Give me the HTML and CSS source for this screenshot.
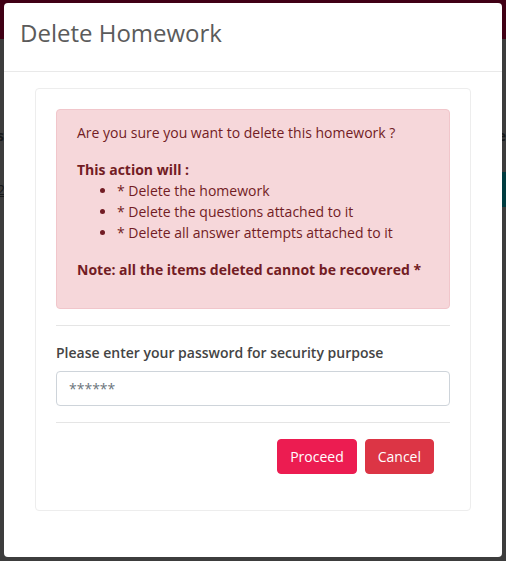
FILE: index.html
```html
<!DOCTYPE html>
<html lang="en">
<head>
<meta charset="utf-8">
<meta name="viewport" content="width=device-width, initial-scale=1">
<title>Delete Homework</title>
<link rel="stylesheet" href="styles.css">
</head>
<body>
<div class="page" aria-hidden="true">
  <div class="page-bar"></div>
  <div class="page-row page-head"><b>s</b><b>e</b></div>
  <div class="page-row"><u>2</u><span class="page-action"></span></div>
</div>
<div class="overlay">
  <section class="modal" role="dialog" aria-modal="true" aria-labelledby="title">
    <header class="modal-header">
      <h1 class="modal-title" id="title">Delete Homework</h1>
    </header>
    <div class="modal-body">
      <form class="card">
        <div class="alert" role="alert">
          <p>Are you sure you want to delete this homework ?</p>
          <strong>This action will :</strong>
          <ul>
            <li>* Delete the homework</li>
            <li>* Delete the questions attached to it</li>
            <li>* Delete all answer attempts attached to it</li>
          </ul>
          <p><strong>Note: all the items deleted cannot be recovered *</strong></p>
        </div>
        <hr>
        <label class="label" for="password">Please enter your password for security purpose</label>
        <input class="input" id="password" type="password" placeholder="******">
        <hr>
        <div class="actions">
          <button class="btn btn-proceed" type="submit">Proceed</button>
          <button class="btn btn-cancel" type="button">Cancel</button>
        </div>
      </form>
    </div>
  </section>
</div>
</body>
</html>
```
FILE: styles.css
```css
*, *::before, *::after {
  box-sizing: border-box;
}

body {
  margin: 0;
  background: #3d3d3d;
  color: #495057;
  font: 14px/21px "Open Sans", "Noto Sans", sans-serif;
}

.page {
  position: absolute;
  inset: 0;
  overflow: hidden;
  color: #17191b;
}

.page-bar {
  height: 39px;
  background: #400015;
}

.page-row {
  display: flex;
  align-items: center;
  justify-content: space-between;
  height: 37px;
}

.page-head {
  align-items: flex-start;
  height: 46px;
  margin-top: 86px;
}

.page-row > :first-child {
  margin-left: -3px;
}

.page-action {
  width: 5px;
  height: 35px;
  background: #003c40;
}

.overlay {
  position: relative;
  min-height: 100vh;
  padding: 3px 4px 4px;
}

.modal {
  border-radius: 4px;
  background: #fff;
}

.modal-header {
  padding: 12px 16px 20px;
  border-bottom: 1px solid #e9e9e9;
}

.modal-title {
  margin: 0;
  color: #5b5b5b;
  font-size: 24px;
  font-weight: 400;
  line-height: 36px;
}

.modal-body {
  padding: 16px 31px 46px;
}

.card {
  padding: 20px 20px 36px;
  border: 1px solid #ededed;
  border-radius: 4px;
}

.alert {
  padding: 12px 20px;
  border: 1px solid #f1c6cb;
  border-radius: 4px;
  background: #f6d7da;
  color: #721c24;
}

.alert p {
  margin: 0 0 16px;
}

.alert ul {
  margin: 0 0 16px;
  padding-left: 40px;
}

hr {
  height: 1px;
  margin: 16px 0;
  border: 0;
  background: #e5e5e5;
}

.label {
  display: block;
  margin-bottom: 8px;
  color: #444;
  font-weight: 600;
}

.input {
  display: block;
  width: 100%;
  padding: 6px 12px;
  border: 1px solid #ced4da;
  border-radius: 4px;
  background: #fff;
  color: #495057;
  font: inherit;
}

.input::placeholder {
  color: #6c757d;
  opacity: 1;
}

.actions {
  display: flex;
  justify-content: flex-end;
  gap: 8px;
  padding-right: 16px;
}

.btn {
  padding: 6px 12px;
  border: 1px solid transparent;
  border-radius: 4px;
  color: #fff;
  font: inherit;
  cursor: pointer;
}

.btn-proceed {
  border-color: #ec1c51;
  background: #ec1c51;
}

.btn-cancel {
  border-color: #dc3545;
  background: #dc3545;
}
```
